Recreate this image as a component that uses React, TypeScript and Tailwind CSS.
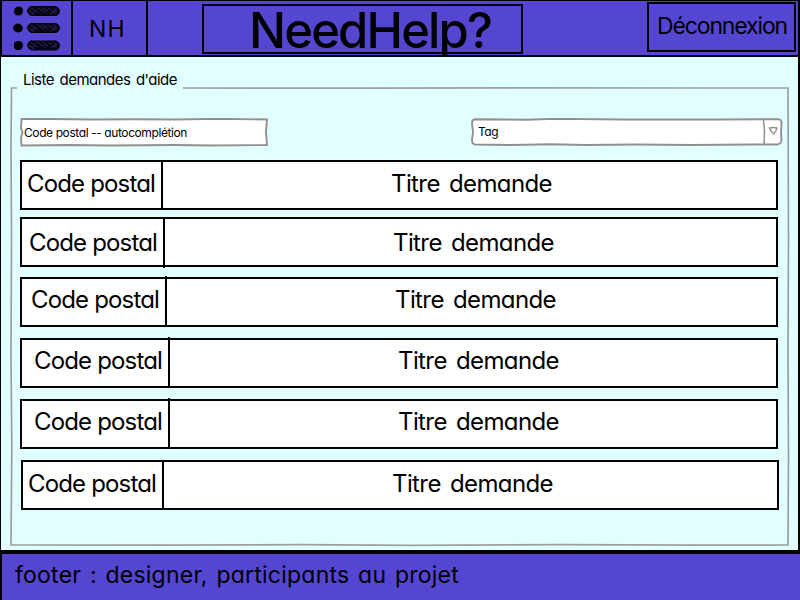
import { useLayoutEffect, useRef, useState } from "react";
import { clsx } from "clsx";

// Single line of lettering, tracked so that it fills the requested width.
function Lettering({ text, width, className }: { text: string; width: number; className?: string }) {
  const ref = useRef<HTMLSpanElement>(null);
  const [spacing, setSpacing] = useState(0);
  useLayoutEffect(() => {
    if (!ref.current) return;
    const natural = ref.current.getBoundingClientRect().width;
    setSpacing((width - natural) / text.length);
  }, [text, width]);
  return (
    <span ref={ref} className={clsx("inline-block shrink-0 whitespace-pre", className)} style={{ letterSpacing: spacing + "px" }}>
      {text}
    </span>
  );
}

const requests = [
  { row: "", cell: "w-[141px] pl-[5px]", text: "pt-[6px]" },
  { row: "mt-[7px]", cell: "-mb-[3px] w-[143px] pl-[7px]", text: "pt-[8px]" },
  { row: "mt-[10px]", cell: "-mt-[3px] w-[145px] pl-[9px]", text: "pt-[5px]", lifted: true },
  { row: "mt-[11px]", cell: "-mt-[3px] w-[148px] pl-[12px]", text: "pt-[5px]", lifted: true },
  { row: "mt-[11px]", cell: "-mt-[3px] w-[148px] pl-[12px]", text: "pt-[5px]", lifted: true },
  { row: "mt-[11px] ml-px -mr-px", cell: "w-[141px] pl-[5px]", text: "pt-[6px]" },
];

function MenuIcon() {
  return (
    <svg viewBox="0 0 50 50" className="h-[50px] w-[50px]" fill="none" strokeLinecap="round">
      <g fill="#000">
        <path d="M1 8.500Q1 4 5.500 3.500Q10 3.500 10 8Q9.500 12.500 5.500 12.500Q1 12.500 1 8.500Z" />
        <path d="M0 25Q1 20.500 5 20.500Q9 21 10 25Q9 29.500 5 29.500Q1 29 0 25Z" />
        <path d="M1 43Q0 38.500 5 38Q10 38 10 42.500Q9 47.500 5 47Q1 47 1 43Z" />
      </g>
      {[8, 25, 42.5].map((y) => (
        <g key={y} transform={`translate(0 ${y})`}>
          <path d="M18-4.500H43Q46.500-3 46.500 0Q46 4 43 4.500H18Q15 3 14.500 0Q15-4 18-4.500Z" fill="#08060f" stroke="#000" />
          <path
            d="M16 0l5 3.500M18-3l6 4M24-3.500l8 5M29-3.500l6 4M35-3l8 5M40-3.500l4 3M19 3l3-3M38 3l5-4"
            stroke="#3c309a"
            strokeWidth=".7"
          />
        </g>
      ))}
    </svg>
  );
}

export default function App() {
  return (
    <div className="flex h-[600px] w-[800px] flex-col overflow-hidden bg-[#e2ffff] font-['Inter','Open_Sans',sans-serif] text-black [font-feature-settings:'cv11','calt'_0]">
      <header className="flex h-[57px] shrink-0 border-t border-r-2 border-b-2 border-l-2 border-black bg-[#5546d2]">
        <div className="flex w-[69px] shrink-0 pt-[2px] pl-[11px]">
          <MenuIcon />
        </div>
        <div className="h-[54px] w-[77px] shrink-0 border-x-2 border-black pt-[12px] pl-[16px] text-[23px] leading-[32px]">
          <Lettering text="NH" width={37} />
        </div>
        <div className="mt-[3px] ml-[54px] h-[50px] w-[321px] shrink-0 border-2 border-black pl-[45px] text-[49px] leading-[50px] font-medium">
          <Lettering text="NeedHelp?" width={242} className="-mt-px" />
        </div>
        <div className="mt-px ml-[124px] h-[50px] w-[149px] shrink-0 border-2 border-black pt-[6px] pl-[8px] text-[23px] leading-[32px]">
          <Lettering text="Déconnexion" width={130} />
        </div>
      </header>

      <main className="relative h-[493px] shrink-0 border-r-2 border-l border-black bg-[#e2ffff] pr-[20px] pl-[19px]">
        <svg viewBox="0 0 797 493" className="pointer-events-none absolute inset-0 h-full w-full" fill="none" stroke="#9c9f9f" strokeWidth="1.7">
          <path d="M16 31H10.500L10 90L10.500 180L10 300L10.800 390L10 487.800L150 488.200L300 487.600L410 488.400L560 487.600L700 488.200L787 488L787.500 400L787 300L787.500 180L787 31L700 31L520 30.800L370 31.200L182 31" />
        </svg>
        <h2 className="h-[61px] pt-[12px] pl-[3px] text-[15px] leading-[22px] [word-spacing:2px]">
          <Lettering text="Liste demandes d'aide" width={154} />
        </h2>
        <div className="flex h-[42px] justify-between">
          <div className="relative h-[29px] w-[248px] pt-[5px] pl-[4px] text-[12px] leading-[20px]">
            <svg viewBox="0 0 248 29" className="absolute inset-0 h-full w-full" fill="#fff" stroke="#918f8f" strokeWidth="1.9">
              <path d="M1.500 1L32 1L72 1.500L115 1.200L155 1.500L198 .8L247 1.500L246 14L247 27L190 27.500L155 27L90 27.500L50 27L1.500 27.500L1 20L2.500 14L1 10Z" />
            </svg>
            <Lettering text="Code postal -- autocomplétion" width={163} className="relative" />
          </div>
          <div className="relative mr-[-5px] h-[29px] w-[312px] pt-[4px] pl-[7px] text-[12px] leading-[20px]">
            <svg viewBox="0 0 312 29" className="absolute inset-0 h-full w-full" fill="#fff" stroke="#918f8f" strokeWidth="1.9" strokeLinejoin="round">
              <path d="M4 1.200L55 1.700L85 .8L150 1.500L250 1.500L307 1.200Q311 1.700 310.500 5L310 15L310.500 22Q310 26 306 26.500L280 26.500L220 27L165 26.500L115 27L80 26.300L40 27L4 26.500Q1 26 1 22L2 14L1 5Q1 1.500 4 1.200Z" />
              <path d="M292.500 2L293.500 13L293 26.500" strokeWidth="1.5" />
              <path d="M298.500 10Q302 9 306 10Q305.500 13 302.500 16Q299.500 13 298.500 10Z" strokeWidth="1.5" />
            </svg>
            <Lettering text="Tag" width={20} className="relative" />
          </div>
        </div>
        <ul className="w-[758px]">
          {requests.map((r, i) => (
            <li key={i} className={clsx("relative flex h-[50px] border-2 border-black bg-white text-[24px] leading-[32px]", r.row)}>
              <div className={clsx("shrink-0 border-r-2 border-black", r.cell, r.lifted ? "pt-[8px]" : r.text)}>
                <Lettering text="Code postal" width={128} />
              </div>
              <div className={clsx("pl-[228px] [word-spacing:3px]", r.text)}>
                <Lettering text="Titre demande" width={161} />
              </div>
            </li>
          ))}
        </ul>
      </main>

      <footer className="flex h-[50px] shrink-0 border-t-4 border-l-2 border-black bg-[#5546d2] pt-[5px] pl-[13px] text-[23px] leading-[32px] [word-spacing:2px]">
        <Lettering text="footer : designer, participants au projet" width={444} />
      </footer>
    </div>
  );
}
